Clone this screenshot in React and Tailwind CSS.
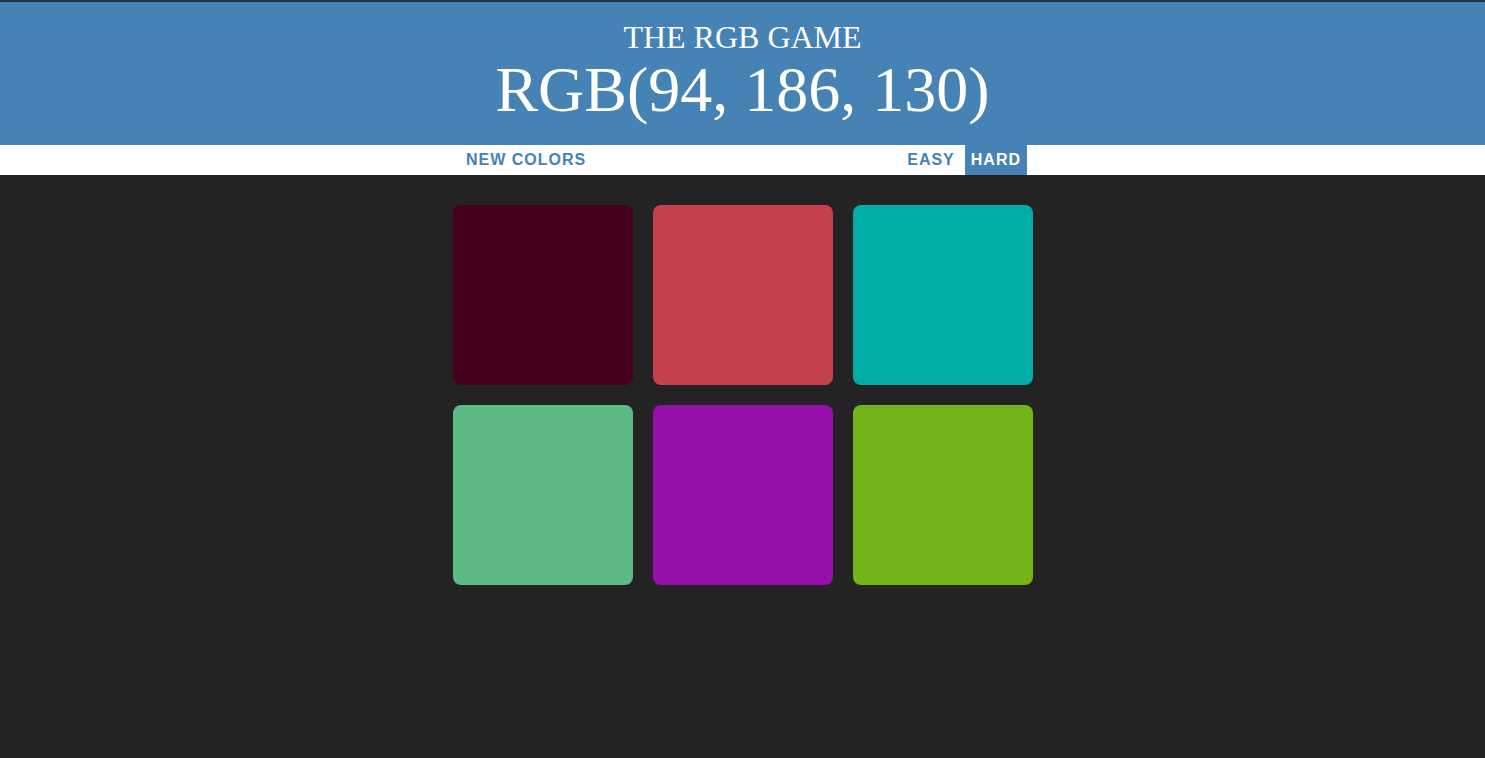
import React from "react";

const squares = [
  "bg-[#45001d]",
  "bg-[#c5404e]",
  "bg-[#02ada6]",
  "bg-[#5eba82]",
  "bg-[#9510a9]",
  "bg-[#72b51a]",
];

export default function App() {
  return (
    <div className="min-h-screen bg-[#232323] font-['Liberation_Sans',Arial,sans-serif]">
      {/* header */}
      <h1 className="bg-[#4682b4] text-white text-center font-normal leading-[1.1] border-t-2 border-[#243242] pt-[18px] pb-[19px] font-['Liberation_Serif','Times_New_Roman',serif]">
        <div className="text-[32px]">THE RGB GAME</div>
        <div className="text-[64px]">RGB(94, 186, 130)</div>
      </h1>

      {/* stripe */}
      <div className="bg-white h-[30px] flex justify-center pl-[2px] text-[16px]">
        <button className="h-full px-[6px] font-bold uppercase tracking-[1px] text-[#4682b4]">
          New Colors
        </button>
        <span className="w-[309px]" />
        <button className="h-full px-[6px] font-bold uppercase tracking-[1px] text-[#4682b4]">
          Easy
        </button>
        <button className="h-full ml-[4px] px-[6px] font-bold uppercase tracking-[1px] text-white bg-[#4682b4]">
          Hard
        </button>
      </div>

      {/* squares */}
      <div className="max-w-[600px] mx-auto mt-[20px] flex flex-wrap">
        {squares.map((c, i) => (
          <div key={i} className={`w-[180px] h-[180px] m-[10px] rounded-[8px] ${c}`} />
        ))}
      </div>
    </div>
  );
}
